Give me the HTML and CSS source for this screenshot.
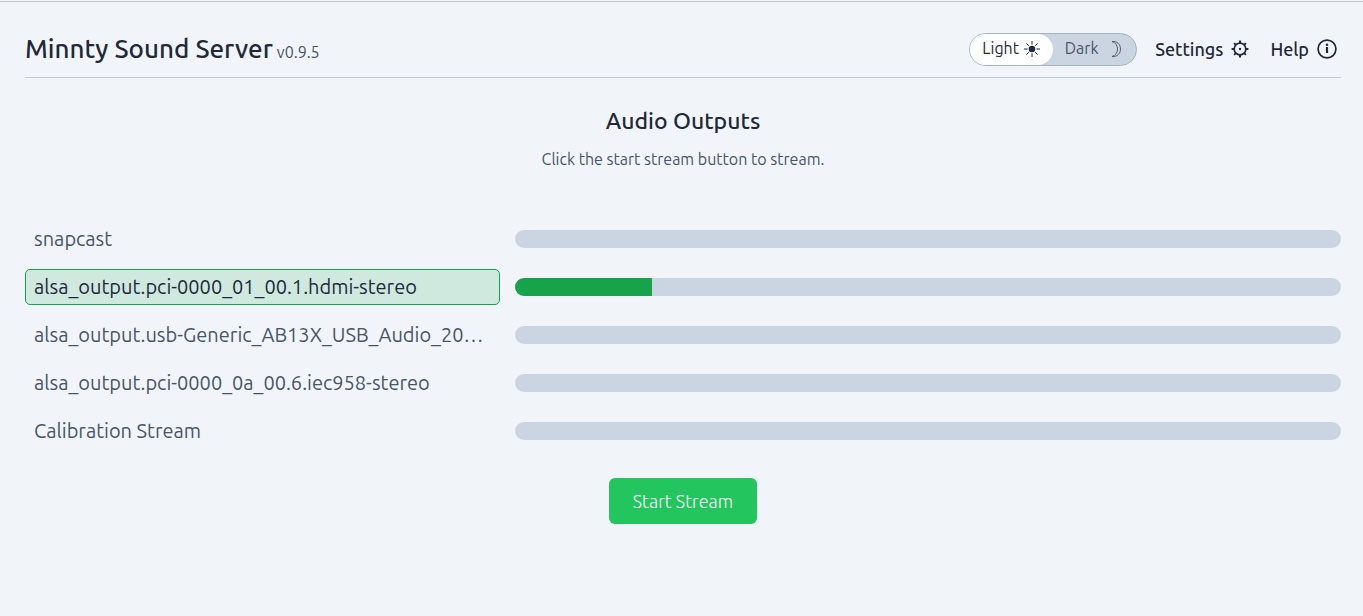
FILE: index.html
```html
<!DOCTYPE html>
<html lang="en">
<head>
    <meta charset="UTF-8">
    <meta name="viewport" content="width=device-width, initial-scale=1.0">
    <title>Minnty Sound Server</title>
    <link rel="stylesheet" href="styles.css">
</head>
<body>
    <div class="container">
        <header class="header">
            <h1>Minnty Sound Server</h1>
            <span class="version">v0.9.5</span>

            <nav class="nav">
                <div class="theme-switch">
                    <button type="button" class="theme active" data-theme="light">Light
                        <svg class="theme-icon" viewBox="0 0 18 18" aria-hidden="true">
                            <circle cx="9" cy="9" r="3.3" fill="currentColor"/>
                            <path d="M9 1v3.6M9 13.4V17M1 9h3.6M13.4 9H17M3.4 3.4l2.4 2.4M12.2 12.2l2.4 2.4M3.4 14.6l2.4-2.4M12.2 5.8l2.4-2.4" stroke="currentColor" stroke-width="1"/>
                        </svg>
                    </button>
                    <button type="button" class="theme" data-theme="dark">Dark
                        <svg class="theme-icon moon" viewBox="0 0 18 18" aria-hidden="true">
                            <path d="M5 1.5c5-.5 8.500 2.800 8.500 7.500s-3.500 8-8.500 7.500c3.600-1 5.500-4 5.500-7.500S8.600 2.500 5 1.500z" fill="none" stroke="currentColor" stroke-width="0.9"/>
                        </svg>
                    </button>
                </div>
                <a href="#settings" class="nav-link">Settings
                    <svg class="gear-icon" viewBox="0 0 18 18" aria-hidden="true">
                        <circle cx="9" cy="9" r="5.8" fill="none" stroke="currentColor" stroke-width="1.7"/>
                        <circle cx="9" cy="9" r="1.2" fill="currentColor"/>
                        <path d="M9 .6v2.600M9 14.800v2.600M.6 9h2.600M14.800 9h2.600M3.100 3.100l1.800 1.800M13.100 13.100l1.800 1.800M3.100 14.900l1.800-1.800M13.100 4.900l1.800-1.800" stroke="currentColor" stroke-width="2"/>
                    </svg>
                </a>
                <a href="#help" class="nav-link">Help
                    <svg class="info-icon" viewBox="0 0 20 20" aria-hidden="true">
                        <circle cx="10" cy="10" r="8.9" fill="none" stroke="currentColor" stroke-width="1.7"/>
                        <path d="M10 8v6" stroke="currentColor" stroke-width="2.2"/>
                        <circle cx="10" cy="5.7" r="1.3" fill="currentColor"/>
                    </svg>
                </a>
            </nav>
        </header>

        <main>
            <h2>Audio Outputs</h2>
            <p class="hint">Click the start stream button to stream.</p>

            <div class="outputs">
                <div class="output">
                    <button type="button" class="output-name">snapcast</button>
                    <div class="level"><div class="level-bar" style="width: 0%"></div></div>
                </div>
                <div class="output">
                    <button type="button" class="output-name selected">alsa_output.pci-0000_01_00.1.hdmi-stereo</button>
                    <div class="level"><div class="level-bar" style="width: 16.6%"></div></div>
                </div>
                <div class="output">
                    <button type="button" class="output-name">alsa_output.usb-Generic_AB13X_USB_Audio_20…</button>
                    <div class="level"><div class="level-bar" style="width: 0%"></div></div>
                </div>
                <div class="output">
                    <button type="button" class="output-name">alsa_output.pci-0000_0a_00.6.iec958-stereo</button>
                    <div class="level"><div class="level-bar" style="width: 0%"></div></div>
                </div>
                <div class="output">
                    <button type="button" class="output-name">Calibration Stream</button>
                    <div class="level"><div class="level-bar" style="width: 0%"></div></div>
                </div>
            </div>

            <button type="button" class="start">Start Stream</button>
        </main>
    </div>

    <script>
        document.querySelectorAll('.output-name').forEach(button => {
            button.addEventListener('click', () => {
                document.querySelector('.output-name.selected').classList.remove('selected');
                button.classList.add('selected');
            });
        });

        document.querySelectorAll('.theme').forEach(button => {
            button.addEventListener('click', () => {
                document.querySelector('.theme.active').classList.remove('active');
                button.classList.add('active');
            });
        });
    </script>
</body>
</html>
```
FILE: styles.css
```css
* { box-sizing: border-box; }
body {
    margin: 0;
    padding-top: 1px;
    font-family: Ubuntu, "Noto Sans", sans-serif;
    font-size: 16px;
    color: #475569;
    background-color: #f1f5f9;
}
.container {
    border-top: 1px solid #c4c8cc;
    padding: 24px 22px 24px 25px;
}
button {
    font: inherit;
    color: inherit;
    background: none;
    border: none;
    cursor: pointer;
}
h1, h2 {
    margin: 0;
    color: #1e293b;
    font-weight: 500;
}
.header {
    display: flex;
    align-items: baseline;
    gap: 4px;
    height: 52px;
    border-bottom: 1px solid #c2ccd8;
}
h1 {
    font-size: 26px;
    line-height: 46px;
}
.version { font-size: 16px; }
.nav {
    display: flex;
    align-items: center;
    align-self: flex-start;
    gap: 18px;
    margin: 7px 4px 0 auto;
}
.theme-switch {
    display: flex;
    height: 33px;
    border: 1px solid #a3b3c6;
    border-radius: 17px;
    background-color: #cbd5e1;
    overflow: hidden;
}
.theme {
    display: flex;
    align-items: center;
    justify-content: center;
    gap: 4px;
    width: 83px;
    padding: 0 0 3px;
}
.theme.active {
    color: #1e293b;
    background-color: white;
    border-radius: 0 17px 17px 0;
}
.theme-icon {
    width: 18px;
    height: 18px;
    margin-top: 2px;
}
.moon { margin-left: 4px; }
.nav-link {
    display: flex;
    align-items: center;
    gap: 8px;
    color: #1e293b;
    font-size: 18px;
    font-weight: 500;
    line-height: 20px;
    padding-bottom: 2px;
    text-decoration: none;
}
.nav-link + .nav-link { margin-left: 3px; }
.nav-link:hover { color: #16a34a; }
.gear-icon { width: 18px; height: 18px; }
.info-icon { width: 20px; height: 20px; }
main { text-align: center; }
h2 {
    margin-top: 28px;
    font-size: 23px;
    line-height: 30px;
}
.hint {
    margin: 11px 0 50px;
    line-height: 24px;
}
.outputs {
    display: grid;
    gap: 12px;
}
.output {
    display: grid;
    grid-template-columns: 23fr 40fr;
    align-items: center;
    gap: 15px;
}
.output-name {
    min-width: 0;
    height: 36px;
    padding: 0 8px 2px;
    border: 1px solid transparent;
    border-radius: 5px;
    font-size: 20px;
    text-align: left;
    white-space: nowrap;
    overflow: hidden;
    text-overflow: ellipsis;
}
.output-name.selected {
    color: #1e293b;
    background-color: #cfe9de;
    border-color: #16a34a;
}
.level {
    height: 18px;
    border-radius: 9px;
    background-color: #cbd5e1;
    overflow: hidden;
}
.level-bar {
    height: 100%;
    background-color: #16a34a;
}
.start {
    min-width: 148px;
    height: 46px;
    margin-top: 29px;
    padding: 0 20px;
    border-radius: 6px;
    color: white;
    background-color: #22c55e;
    font-size: 18px;
    font-weight: 300;
}
.start:hover { background-color: #16a34a; }
```
